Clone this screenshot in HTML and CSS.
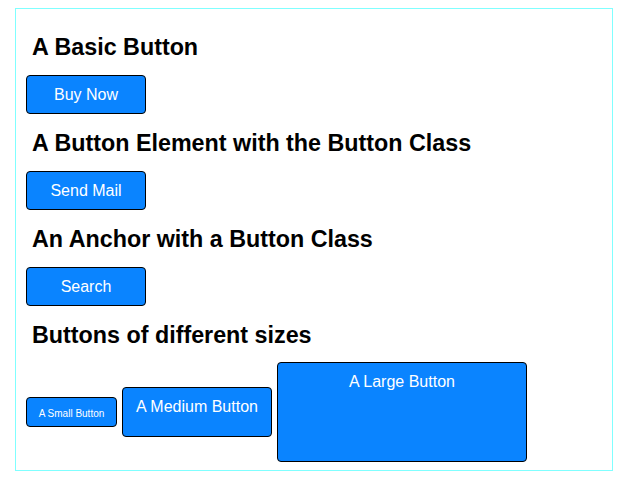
FILE: index.html
```html
<!DOCTYPE html>
<html lang="en">
<head>
<meta charset="utf-8">
<title>Buttons</title>
<link rel="stylesheet" href="styles.css">
</head>
<body>
<div class="page">
  <section class="demo">
    <h2 class="demo-title">A Basic Button</h2>
    <div class="demo-row"><a class="button" href="#">Buy Now</a></div>
  </section>
  <section class="demo">
    <h2 class="demo-title">A Button Element with the Button Class</h2>
    <div class="demo-row"><button class="button" type="button">Send Mail</button></div>
  </section>
  <section class="demo">
    <h2 class="demo-title">An Anchor with a Button Class</h2>
    <div class="demo-row"><a class="button" href="#">Search</a></div>
  </section>
  <section class="demo demo-last">
    <h2 class="demo-title">Buttons of different sizes</h2>
    <div class="demo-row sizes">
      <a class="button button-small" href="#">A Small Button</a>
      <a class="button button-medium" href="#">A Medium Button</a>
      <a class="button button-large" href="#">A Large Button</a>
    </div>
  </section>
</div>
</body>
</html>
```
FILE: styles.css
```css
html, body {
  background: #ffffff;
}

body {
  margin: 8px 8px 8px 15px;
  font-family: "Liberation Sans", Arial, Helvetica, sans-serif;
  color: #000;
}

.page {
  border: 1px solid #80ffff;
  padding: 0 10px 8px 10px;
}

.demo-title {
  margin: 24px 0 0 0;
  padding-left: 6px;
  font-size: 23.3px;
  line-height: 28px;
  font-weight: bold;
}

.demo + .demo .demo-title {
  margin-top: 15px;
}

.demo-row {
  display: flex;
  margin-top: 14px;
}

.button {
  display: block;
  box-sizing: border-box;
  width: 120px;
  height: 39px;
  margin: 0;
  padding: 10px 0 10px 0;
  border: 1px solid #000;
  border-radius: 4px;
  background: #0a84ff;
  color: #fff;
  font-family: "Liberation Sans", Arial, Helvetica, sans-serif;
  font-size: 16px;
  line-height: 17px;
  text-align: center;
  text-decoration: none;
  -webkit-appearance: none;
  appearance: none;
}

.sizes {
  align-items: center;
  gap: 5px;
  margin-top: 13px;
}

.button-small {
  width: 91px;
  height: 30px;
  padding-bottom: 0;
  font-size: 10px;
  line-height: 11px;
}

.button-medium {
  width: 150px;
  height: 50px;
}

.button-large {
  width: 250px;
  height: 100px;
}
```
